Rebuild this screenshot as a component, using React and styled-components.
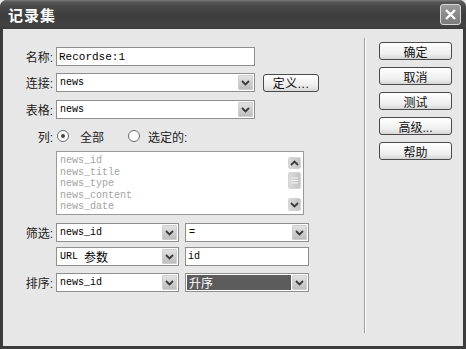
import React from "react";
import styled, { createGlobalStyle } from "styled-components";

const GlobalStyle = createGlobalStyle`
  html, body {
    margin: 0;
    padding: 0;
    background: #e7e7e7;
  }
  body {
    font-family: "Liberation Sans", "Noto Sans CJK SC", sans-serif;
    font-size: 12px;
  }
`;

const Window = styled.div`
  width: 466px;
  height: 349px;
  box-sizing: border-box;
  display: flex;
  flex-direction: column;
  background: #3c3c3c;
  border-radius: 7px 7px 0 0;
  overflow: hidden;
`;

const TitleBar = styled.div`
  height: 29px;
  flex-shrink: 0;
  display: flex;
  align-items: center;
  justify-content: space-between;
  padding: 0 5px 0 8px;
  background: linear-gradient(#7e7e7e 0, #575757 2px, #474747 7px, #3d3d3d 16px, #434343 26px, #3a3a3a 29px);
`;

const Title = styled.span`
  color: #fff;
  font-family: "Noto Sans CJK SC", sans-serif;
  font-weight: bold;
  font-size: 15px;
  letter-spacing: 1px;
  line-height: 1;
`;

const CloseButton = styled.div`
  width: 21px;
  height: 21px;
  box-sizing: border-box;
  border: 1px solid #d8d8d8;
  border-radius: 3px;
  background: linear-gradient(#9a9a9a, #7c7c7c);
  display: flex;
  align-items: center;
  justify-content: center;
`;

const Body = styled.div`
  flex: 1;
  display: flex;
  margin: 0 3px 3px;
  padding: 9px 0 13px;
  background: #e7e7e7;
`;

const Form = styled.div`
  width: 361px;
  padding-top: 9px;
  display: flex;
  flex-direction: column;
`;

const Row = styled.div`
  display: flex;
  align-items: center;
  margin-top: ${(p) => p.$mt || 0}px;
  height: ${(p) => p.$h || 19}px;
`;

const Label = styled.div`
  width: 53px;
  flex-shrink: 0;
  box-sizing: border-box;
  text-align: right;
  padding-right: 3px;
  color: #222;
  font-size: 12px;
  white-space: nowrap;
`;

const TextInput = styled.div`
  width: ${(p) => p.$w}px;
  height: 19px;
  box-sizing: border-box;
  border: 1px solid #8f8f8f;
  background: #fff;
  display: flex;
  align-items: center;
  padding-left: 2px;
  font-family: "Liberation Mono", monospace;
  font-size: ${(p) => p.$fs || 10}px;
  color: #000;
  margin-left: ${(p) => p.$ml || 0}px;
`;

const SelectBox = styled.div`
  width: ${(p) => p.$w}px;
  height: 19px;
  box-sizing: border-box;
  border: 1px solid #8f8f8f;
  background: #fff;
  display: flex;
  align-items: center;
  padding: 1px;
  margin-left: ${(p) => p.$ml || 0}px;
`;

const SelectValue = styled.div`
  flex: 1;
  height: 100%;
  display: flex;
  align-items: center;
  padding-left: 2px;
  margin-right: 1px;
  font-family: "Liberation Mono", "Noto Sans CJK SC", monospace;
  font-size: 10px;
  color: ${(p) => (p.$selected ? "#fff" : "#000")};
  background: ${(p) => (p.$selected ? "#5c5c5c" : "transparent")};
`;

const CjkText = styled.span`
  font-family: "Noto Sans CJK SC", sans-serif;
  font-size: 12px;
`;

const ArrowTile = styled.div`
  width: 15px;
  height: 15px;
  box-sizing: border-box;
  border: 1px solid #cfcfcf;
  border-radius: 1px;
  background: linear-gradient(#e2e2e2, #bdbdbd);
  display: flex;
  align-items: center;
  justify-content: center;
`;

const SmallButton = styled.div`
  width: 56px;
  height: 18px;
  box-sizing: border-box;
  margin-left: 8px;
  border: 1px solid #4a4a4a;
  border-radius: 3px;
  background: linear-gradient(#ffffff, #ececec 70%, #d8d8d8);
  display: flex;
  align-items: center;
  justify-content: center;
  font-size: 12px;
  color: #111;
  letter-spacing: 0.5px;
`;

const Radio = styled.div`
  width: 12px;
  height: 12px;
  box-sizing: border-box;
  border-radius: 50%;
  border: 1px solid #6a6a6a;
  background: #fff;
  margin-left: ${(p) => p.$ml || 0}px;
  display: flex;
  align-items: center;
  justify-content: center;
  &::after {
    content: "";
    display: ${(p) => (p.$checked ? "block" : "none")};
    width: 4px;
    height: 4px;
    border-radius: 50%;
    background: #444;
  }
`;

const RadioText = styled.span`
  margin-left: ${(p) => p.$ml}px;
  font-size: 12px;
  color: #222;
`;

const ListBox = styled.div`
  margin-left: 53px;
  width: 248px;
  height: 64px;
  box-sizing: border-box;
  border: 1px solid #9a9a9a;
  background: #fff;
  display: flex;
  padding: 1px;
`;

const ListItems = styled.div`
  flex: 1;
  padding: 2px 0 0 2px;
  font-family: "Liberation Mono", monospace;
  font-size: 10px;
  line-height: 11.6px;
  color: #a3a3a3;
  overflow: hidden;
`;

const ScrollBar = styled.div`
  width: 15px;
  display: flex;
  flex-direction: column;
  align-items: center;
  padding-top: 4px;
  gap: 3px;
`;

const ScrollTile = styled.div`
  width: 13px;
  height: ${(p) => p.$h}px;
  box-sizing: border-box;
  border: 1px solid #d4d4d4;
  border-radius: 2px;
  background: linear-gradient(90deg, #dadada, #c4c4c4);
  display: flex;
  align-items: center;
  justify-content: center;
  margin-top: ${(p) => p.$mt || 0}px;
`;

const Separator = styled.div`
  width: 1px;
  background: #9c9c9c;
  border-right: 1px solid #fff;
`;

const ButtonColumn = styled.div`
  padding: 4px 0 0 13px;
  display: flex;
  flex-direction: column;
  gap: 7px;
`;

const DialogButton = styled.div`
  width: 73px;
  height: 18px;
  box-sizing: border-box;
  border: 1px solid #4a4a4a;
  border-radius: 3px;
  background: linear-gradient(#ffffff, #eeeeee 70%, #d6d6d6);
  display: flex;
  align-items: center;
  justify-content: center;
  font-size: 12px;
  color: #111;
`;

const Chevron = ({ up }) => (
  <svg width="9" height="6" viewBox="0 0 9 6">
    <path
      d={up ? "M1 5 L4.5 1.5 L8 5" : "M1 1 L4.5 4.5 L8 1"}
      fill="none"
      stroke="#3a3a3a"
      strokeWidth="1.8"
    />
  </svg>
);

const Select = ({ w, ml, selected, children }) => (
  <SelectBox $w={w} $ml={ml}>
    <SelectValue $selected={selected}>{children}</SelectValue>
    <ArrowTile>
      <Chevron />
    </ArrowTile>
  </SelectBox>
);

const columns = ["news_id", "news_title", "news_type", "news_content", "news_date"];
const buttons = ["确定", "取消", "测试", "高级...", "帮助"];

export default function App() {
  return (
    <>
      <GlobalStyle />
      <Window>
        <TitleBar>
          <Title>记录集</Title>
          <CloseButton>
            <svg width="13" height="13" viewBox="0 0 13 13">
              <path d="M2 2 L11 11 M11 2 L2 11" stroke="#fff" strokeWidth="2.4" />
            </svg>
          </CloseButton>
        </TitleBar>
        <Body>
          <Form>
            <Row>
              <Label>名称:</Label>
              <TextInput $w={199} $fs={11}>Recordse:1</TextInput>
            </Row>
            <Row $mt={7}>
              <Label>连接:</Label>
              <Select w={199}>news</Select>
              <SmallButton>定义...</SmallButton>
            </Row>
            <Row $mt={8}>
              <Label>表格:</Label>
              <Select w={199}>news</Select>
            </Row>
            <Row $mt={9} $h={16}>
              <Label>列:</Label>
              <Radio $checked $ml={1} />
              <RadioText $ml={11}>全部</RadioText>
              <Radio $ml={24} />
              <RadioText $ml={8}>选定的:</RadioText>
            </Row>
            <Row $mt={7} $h={64}>
              <ListBox>
                <ListItems>
                  {columns.map((c) => (
                    <div key={c}>{c}</div>
                  ))}
                </ListItems>
                <ScrollBar>
                  <ScrollTile $h={12}>
                    <Chevron up />
                  </ScrollTile>
                  <ScrollTile $h={17}>
                    <svg width="7" height="7" viewBox="0 0 7 7">
                      <path d="M0 1h7M0 3.5h7M0 6h7" stroke="#f2f2f2" strokeWidth="1" />
                    </svg>
                  </ScrollTile>
                  <ScrollTile $h={13} $mt={6}>
                    <Chevron />
                  </ScrollTile>
                </ScrollBar>
              </ListBox>
            </Row>
            <Row $mt={8}>
              <Label>筛选:</Label>
              <Select w={123}>news_id</Select>
              <Select w={124} ml={6}>=</Select>
            </Row>
            <Row $mt={5}>
              <Label />
              <Select w={123}>
                URL&nbsp;<CjkText>参数</CjkText>
              </Select>
              <TextInput $w={124} $ml={6}>id</TextInput>
            </Row>
            <Row $mt={7}>
              <Label>排序:</Label>
              <Select w={123}>news_id</Select>
              <Select w={124} ml={6} selected>
                <CjkText>升序</CjkText>
              </Select>
            </Row>
          </Form>
          <Separator />
          <ButtonColumn>
            {buttons.map((b) => (
              <DialogButton key={b}>{b}</DialogButton>
            ))}
          </ButtonColumn>
        </Body>
      </Window>
    </>
  );
}
